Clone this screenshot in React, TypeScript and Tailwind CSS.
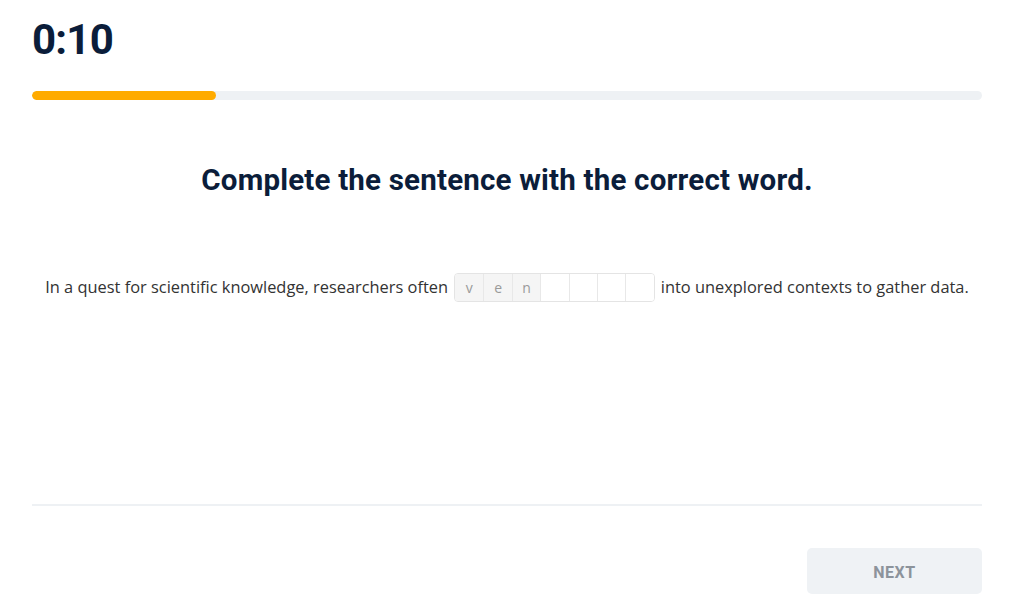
export default function App() {
  const letters = ['v', 'e', 'n', '', '', '', ''];

  return (
    <div className="w-[1009px] h-[603px] bg-white overflow-hidden">
      <div className="flex flex-col h-full pl-8 pr-[27px]">
        <div className="pt-[19px] h-[91px] text-[42px] leading-[42px] font-bold tracking-[-0.8px] text-[#0b1d3a] [font-family:Roboto,sans-serif]">
          0:10
        </div>

        <div className="h-[9px] w-full rounded-full bg-[#eef1f4] overflow-hidden">
          <div className="h-full w-[184px] rounded-full bg-[#ffab00]" />
        </div>

        <h1 className="mt-[61px] text-center text-[29.5px] leading-[38px] font-bold text-[#0b1d3a] [font-family:Roboto,sans-serif] tracking-[0.2px]">
          Complete the sentence with the correct word.
        </h1>

        <div className="mt-[74px] flex items-center justify-center text-[16.4px] text-[#333333] [font-family:'Open_Sans',sans-serif]">
          <span>In a quest for scientific knowledge, researchers often</span>
          <div className="mx-[6px] flex h-[29px] rounded-[4px] border border-[#e4e4e4] overflow-hidden">
            {letters.map((l, i) => (
              <div
                key={i}
                className={`w-[28.4px] flex items-center justify-center text-[14px] text-[#9a9a9a] ${
                  i > 0 ? 'border-l border-[#e8e8e8]' : ''
                } ${l ? 'bg-[#f5f5f5]' : 'bg-white'}`}
              >
                {l}
              </div>
            ))}
          </div>
          <span>into unexplored contexts to gather data.</span>
        </div>

        <div className="mt-auto border-t-2 border-[#eef1f4] h-[99px] flex items-start justify-end pt-[42px]">
          <button className="w-[175px] h-[46px] pt-[3px] rounded-[5px] bg-[#eff2f5] text-[#8c939b] text-[16px] font-bold tracking-[0.5px] [font-family:Roboto,sans-serif]">
            NEXT
          </button>
        </div>
      </div>
    </div>
  );
}
